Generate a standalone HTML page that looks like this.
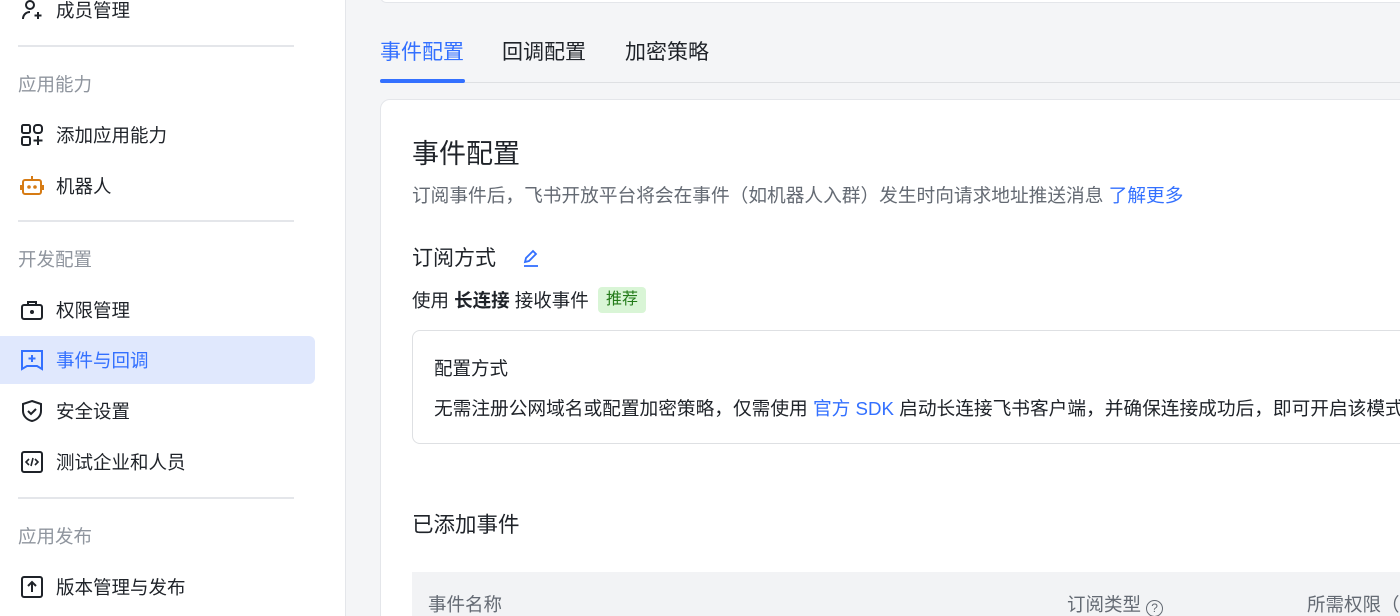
<!DOCTYPE html>
<html><head><meta charset="utf-8"><style>
*{margin:0;padding:0;box-sizing:border-box}
html,body{width:1400px;height:616px;overflow:hidden}
body{background:#f4f5f7;font-family:"Liberation Sans","Noto Sans CJK SC",sans-serif;color:#1f2329;position:relative}
.a{position:absolute;white-space:nowrap}
.side{position:absolute;left:0;top:0;width:346px;height:616px;background:#fff;border-right:1px solid #e4e6ea}
.it{position:absolute;left:56px;font-size:18.5px;line-height:24px;color:#1f2329}
.grp{position:absolute;left:18px;font-size:18.5px;line-height:24px;color:#8f959e}
.dv{position:absolute;left:18px;width:276px;height:2px;background:#e4e6ea}
.ic{position:absolute;left:20px;width:24px;height:24px}
</style></head><body>
<div class="side">
<svg class="ic" style="top:-2px" viewBox="0 0 24 24" fill="none" stroke="#1f2329" stroke-width="2"><circle cx="10" cy="7" r="4"/><path d="M3 21c0-4 3-7 7-7"/><path d="M18 14v7M14.5 17.5h7"/></svg>
<div class="it" style="top:-1px">成员管理</div>
<div class="dv" style="top:45px"></div>
<div class="grp" style="top:73px">应用能力</div>
<svg class="ic" style="top:123px" viewBox="0 0 24 24" fill="none" stroke="#1f2329" stroke-width="2"><rect x="2" y="2" width="8" height="8" rx="1.5"/><rect x="14" y="2" width="8" height="8" rx="3"/><rect x="2" y="14" width="8" height="8" rx="1.5"/><path d="M18 13v9M13.5 17.5h9"/></svg>
<div class="it" style="top:124px">添加应用能力</div>
<svg class="ic" style="top:174px" viewBox="0 0 24 24" fill="none" stroke="#d67b14" stroke-width="2"><rect x="3" y="6" width="18" height="14" rx="2"/><path d="M12 2v4M1 11v5M23 11v5"/><circle cx="9" cy="13" r=".8" fill="#d67b14"/><circle cx="15" cy="13" r=".8" fill="#d67b14"/></svg>
<div class="it" style="top:175px">机器人</div>
<div class="dv" style="top:220px"></div>
<div class="grp" style="top:248px">开发配置</div>
<svg class="ic" style="top:298px" viewBox="0 0 24 24" fill="none" stroke="#1f2329" stroke-width="2"><rect x="2" y="7" width="20" height="14" rx="2"/><path d="M8 7V4h8v3"/><circle cx="12" cy="14" r="1" fill="#1f2329"/></svg>
<div class="it" style="top:299px">权限管理</div>
<div class="a" style="left:0;top:336px;width:315px;height:48px;background:#e0e8fd;border-radius:0 6px 6px 0"></div>
<svg class="ic" style="top:348px" viewBox="0 0 24 24" fill="none" stroke="#3370ff" stroke-width="2"><path d="M2 3h20v18l-5-3H7l-5 3z"/><path d="M12 7v7M8.5 10.5h7"/></svg>
<div class="it" style="top:349px;color:#3370ff">事件与回调</div>
<svg class="ic" style="top:399px" viewBox="0 0 24 24" fill="none" stroke="#1f2329" stroke-width="2"><path d="M12 2l9 3v7c0 5-4 9-9 10-5-1-9-5-9-10V5z"/><path d="M8 12l3 3 5-5"/></svg>
<div class="it" style="top:400px">安全设置</div>
<svg class="ic" style="top:450px" viewBox="0 0 24 24" fill="none" stroke="#1f2329" stroke-width="2"><rect x="2" y="2" width="20" height="20" rx="2"/><path d="M9 9l-3 3 3 3M15 9l3 3-3 3M13 8l-2 8" stroke-width="1.6"/></svg>
<div class="it" style="top:451px">测试企业和人员</div>
<div class="dv" style="top:497px"></div>
<div class="grp" style="top:525px">应用发布</div>
<svg class="ic" style="top:575px" viewBox="0 0 24 24" fill="none" stroke="#1f2329" stroke-width="2"><rect x="2" y="2" width="20" height="20" rx="2"/><path d="M12 17V8M8 11l4-4 4 4"/></svg>
<div class="it" style="top:576px">版本管理与发布</div>
</div>

<div class="a" style="left:380px;top:-10px;width:1040px;height:13px;background:#fff;border:1px solid #e4e6ea;border-radius:8px"></div>
<div class="a" style="left:380px;top:39px;font-size:21px;line-height:28px;color:#3370ff">事件配置</div>
<div class="a" style="left:502px;top:39px;font-size:21px;line-height:28px">回调配置</div>
<div class="a" style="left:625px;top:39px;font-size:21px;line-height:28px">加密策略</div>
<div class="a" style="left:380px;top:82px;width:1020px;height:1px;background:#dee0e3"></div>
<div class="a" style="left:380px;top:79px;width:85px;height:4px;background:#3370ff;border-radius:2px"></div>

<div class="a" style="left:380px;top:99px;width:1040px;height:540px;background:#fff;border:1px solid #e4e6ea;border-radius:10px"></div>
<div class="a" style="left:412px;top:137px;font-size:27px;line-height:34px">事件配置</div>
<div class="a" style="left:412px;top:184px;font-size:18.7px;line-height:24px;color:#646a73">订阅事件后，飞书开放平台将会在事件（如机器人入群）发生时向请求地址推送消息 <span style="color:#3370ff">了解更多</span></div>
<div class="a" style="left:412px;top:246px;font-size:21px;line-height:26px">订阅方式</div>
<svg class="a" style="left:521px;top:248px" width="20" height="20" viewBox="0 0 20 20" fill="none" stroke="#3370ff" stroke-width="1.8"><path d="M4 14l1-4 7-7 3 3-7 7z"/><path d="M3 18h14"/></svg>
<div class="a" style="left:412px;top:289px;font-size:18.5px;line-height:24px">使用 <b>长连接</b> 接收事件</div>
<div class="a" style="left:598px;top:287px;width:48px;height:26px;background:#d9f5d6;border-radius:4px;font-size:16px;line-height:26px;text-align:center;color:#237b19">推荐</div>
<div class="a" style="left:412px;top:330px;width:1010px;height:114px;border:1px solid #dee0e3;border-radius:8px"></div>
<div class="a" style="left:434px;top:357px;font-size:18.5px;line-height:24px">配置方式</div>
<div class="a" style="left:434px;top:397px;font-size:18.7px;line-height:24px">无需注册公网域名或配置加密策略，仅需使用 <span style="color:#3370ff">官方 SDK</span> 启动长连接飞书客户端，并确保连接成功后，即可开启该模式</div>
<div class="a" style="left:412px;top:512px;font-size:21.5px;line-height:26px">已添加事件</div>
<div class="a" style="left:412px;top:572px;width:1000px;height:50px;background:#f2f3f5"></div>
<div class="a" style="left:428px;top:593px;font-size:18.5px;line-height:24px;color:#646a73">事件名称</div>
<div class="a" style="left:1067px;top:593px;font-size:18.5px;line-height:24px;color:#646a73">订阅类型 <span style="display:inline-block;width:17px;height:17px;border:1.5px solid #646a73;border-radius:50%;font-size:12px;line-height:14px;text-align:center;vertical-align:-1px">?</span></div>
<div class="a" style="left:1307px;top:593px;font-size:18.5px;line-height:24px;color:#646a73">所需权限（</div>
</body></html>
